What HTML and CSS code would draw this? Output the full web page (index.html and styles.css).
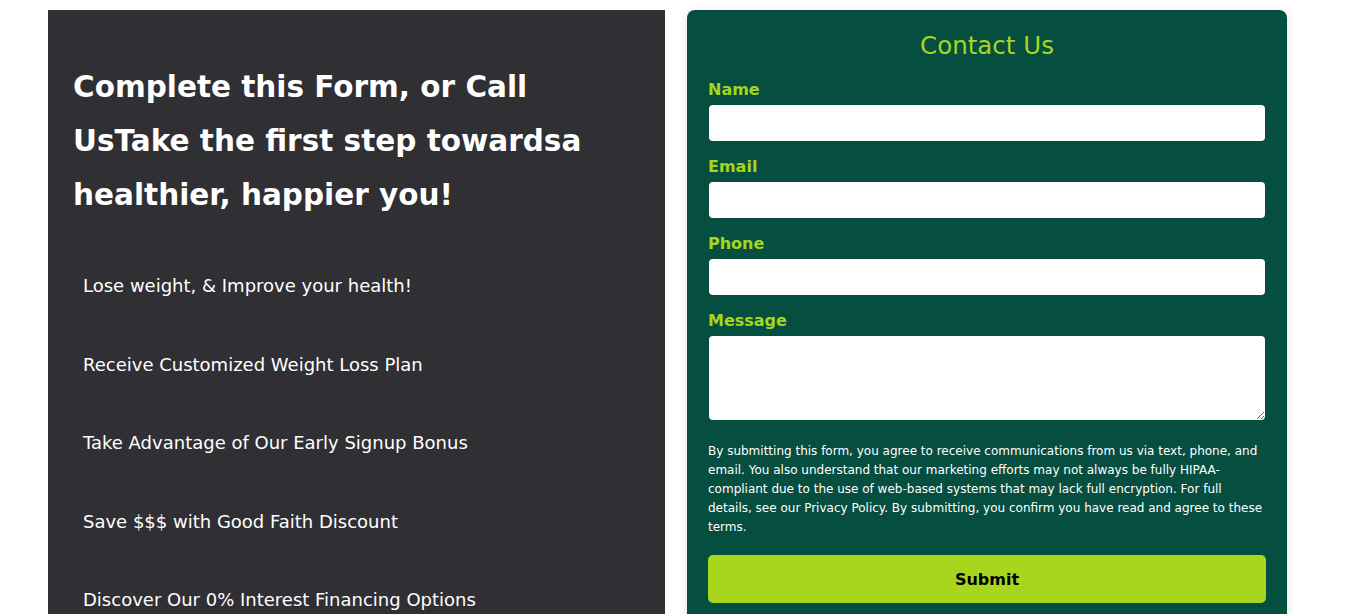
FILE: index.html
```html
<!DOCTYPE html>
<html lang="en">
<head>
<meta charset="utf-8">
<title>Contact</title>
<link rel="stylesheet" href="styles.css">
</head>
<body>
<main class="wrap">
  <section class="intro">
    <h1 class="intro-title">Complete this Form, or Call UsTake the first step towardsa healthier, happier you!</h1>
    <ul class="perks">
      <li>Lose weight, &amp; Improve your health!</li>
      <li>Receive Customized Weight Loss Plan</li>
      <li>Take Advantage of Our Early Signup Bonus</li>
      <li>Save $$$ with Good Faith Discount</li>
      <li>Discover Our 0% Interest Financing Options</li>
    </ul>
  </section>
  <section class="card">
    <h2 class="card-title">Contact Us</h2>
    <form class="form">
      <label class="field"><span class="field-label">Name</span><input type="text" class="input"></label>
      <label class="field"><span class="field-label">Email</span><input type="email" class="input"></label>
      <label class="field"><span class="field-label">Phone</span><input type="tel" class="input"></label>
      <label class="field"><span class="field-label">Message</span><textarea class="input textarea"></textarea></label>
      <p class="consent">By submitting this form, you agree to receive communications from us via text, phone, and email. You also understand that our marketing efforts may not always be fully HIPAA-compliant due to the use of web-based systems that may lack full encryption. For full details, see our Privacy Policy. By submitting, you confirm you have read and agree to these terms.</p>
      <button type="button" class="submit">Submit</button>
    </form>
  </section>
</main>
</body>
</html>
```

FILE: styles.css
```css
* { box-sizing: border-box; }

html, body {
  margin: 0;
  background: #ffffff;
  font-family: "DejaVu Sans", "Open Sans", sans-serif;
}

.wrap {
  display: flex;
  align-items: flex-start;
  gap: 22px;
  padding: 10px 0 0 48px;
}

.intro {
  width: 617px;
  height: 640px;
  background: #2f2f34;
  color: #ffffff;
  padding: 50px 25px 0 25px;
}

.intro-title {
  margin: 0 0 52px;
  font-size: 29.5px;
  font-weight: 700;
  line-height: 54px;
  max-width: 560px;
}

.perks {
  list-style: none;
  margin: 0;
  padding: 0 0 0 10px;
}

.perks li {
  font-size: 18px;
  line-height: 24px;
  margin-bottom: 54.5px;
}

.card {
  width: 600px;
  background: #064e40;
  border-radius: 8px;
  padding: 22px 21px 30px;
  box-shadow: 0 2px 10px rgba(0, 0, 0, 0.12);
}

.card-title {
  margin: 0 0 20px;
  text-align: center;
  color: #a6d61c;
  font-size: 24.5px;
  font-weight: 400;
  line-height: 28px;
}

.form {
  display: flex;
  flex-direction: column;
}

.field {
  display: flex;
  flex-direction: column;
  margin-bottom: 16px;
}

.field-label {
  color: #a6d61c;
  font-size: 16px;
  font-weight: 700;
  line-height: 20px;
  margin-bottom: 5px;
}

.input {
  height: 36px;
  margin: 0 1px;
  border: 0;
  border-radius: 4px;
  background: #ffffff;
  font: inherit;
}

.textarea {
  height: 84px;
  resize: vertical;
}

.consent {
  margin: 6px 0 18px;
  color: #ffffff;
  font-size: 12px;
  line-height: 19px;
}

.submit {
  height: 48px;
  border: 0;
  border-radius: 5px;
  background: #a8d61f;
  color: #000000;
  font-family: inherit;
  font-size: 16px;
  font-weight: 700;
  cursor: pointer;
}
```
